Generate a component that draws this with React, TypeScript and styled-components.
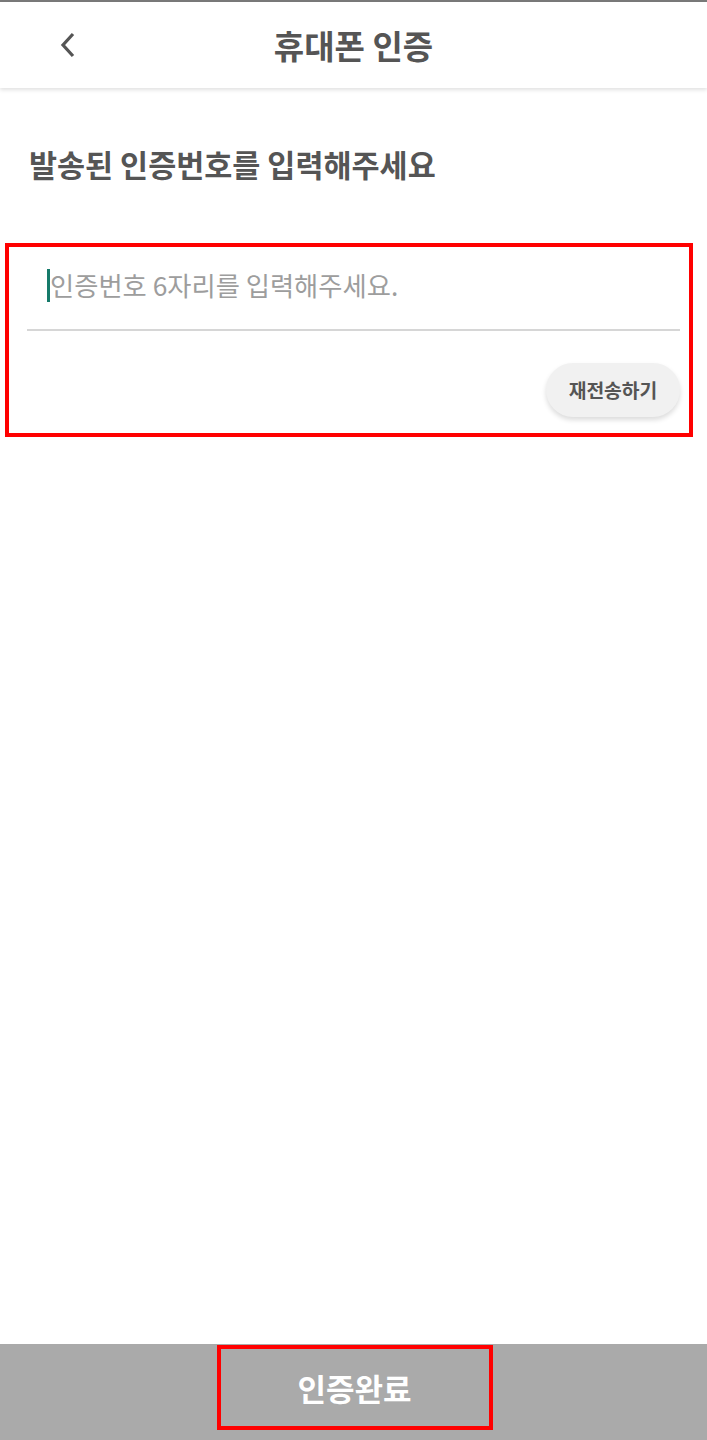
import React from "react";
import styled, { createGlobalStyle } from "styled-components";

const Global = createGlobalStyle`
  html, body { margin: 0; padding: 0; background: #fff; }
  body { font-family: "Noto Sans CJK KR", "Noto Sans", sans-serif; }
  * { box-sizing: border-box; }
`;

const Page = styled.div`
  min-height: 100vh;
  display: flex;
  flex-direction: column;
  border-top: 2px solid #7a7a7a;
`;

const Header = styled.header`
  height: 86px;
  display: flex;
  align-items: center;
  justify-content: center;
  position: relative;
  background: #fff;
  box-shadow: 0 2px 4px rgba(0, 0, 0, 0.12);
  z-index: 1;
`;

const BackButton = styled.button`
  position: absolute;
  left: 52px;
  top: 50%;
  transform: translateY(-50%);
  width: 32px;
  height: 32px;
  padding: 0;
  border: none;
  background: none;
  display: flex;
  align-items: center;
  justify-content: center;
`;

const Title = styled.h1`
  margin: 0;
  font-size: 33px;
  font-weight: 700;
  color: #555;
  line-height: 44px;
`;

const Content = styled.main`
  flex: 1;
  display: flex;
  flex-direction: column;
`;

const Heading = styled.h2`
  margin: 56px 0 0 29px;
  font-size: 30.5px;
  font-weight: 700;
  color: #555;
  line-height: 40px;
`;

const Frame = styled.section`
  margin: 59px 14px 0 5px;
  border: 4px solid #f00;
  height: 194px;
  padding: 14px 9px 0 18px;
  display: flex;
  flex-direction: column;
`;

const InputRow = styled.div`
  height: 70px;
  flex-shrink: 0;
  border-bottom: 2px solid #d6d6d6;
  display: flex;
  align-items: flex-start;
  padding: 5px 0 0 20px;
`;

const Cursor = styled.span`
  width: 3px;
  height: 33px;
  background: #167a6a;
  margin-top: 3px;
`;

const Placeholder = styled.span`
  font-size: 26.3px;
  color: #9d9d9d;
  line-height: 38px;
`;

const ResendRow = styled.div`
  display: flex;
  justify-content: flex-end;
  padding-top: 32px;
`;

const ResendButton = styled.button`
  width: 134px;
  height: 54px;
  border: none;
  border-radius: 27px;
  background: #f1f1f1;
  box-shadow: 0 3px 5px rgba(0, 0, 0, 0.14);
  font-family: inherit;
  font-size: 19.3px;
  font-weight: 700;
  color: #555;
`;

const BottomBar = styled.footer`
  height: 96px;
  background: #aaaaaa;
  display: flex;
  justify-content: center;
  padding-top: 1px;
`;

const CompleteButton = styled.button`
  width: 276px;
  height: 85px;
  margin-left: 2px;
  border: 4px solid #f00;
  background: transparent;
  font-family: inherit;
  font-size: 31px;
  font-weight: 700;
  color: #fff;
`;

export default function App() {
  return (
    <>
      <Global />
      <Page>
        <Header>
          <BackButton aria-label="뒤로">
            <svg width="18" height="26" viewBox="0 0 18 26">
              <path d="M14 2 L4 13 L14 24" fill="none" stroke="#555" strokeWidth="3.2" />
            </svg>
          </BackButton>
          <Title>휴대폰 인증</Title>
        </Header>
        <Content>
          <Heading>발송된 인증번호를 입력해주세요</Heading>
          <Frame>
            <InputRow>
              <Cursor />
              <Placeholder>인증번호 6자리를 입력해주세요.</Placeholder>
            </InputRow>
            <ResendRow>
              <ResendButton>재전송하기</ResendButton>
            </ResendRow>
          </Frame>
        </Content>
        <BottomBar>
          <CompleteButton>인증완료</CompleteButton>
        </BottomBar>
      </Page>
    </>
  );
}
